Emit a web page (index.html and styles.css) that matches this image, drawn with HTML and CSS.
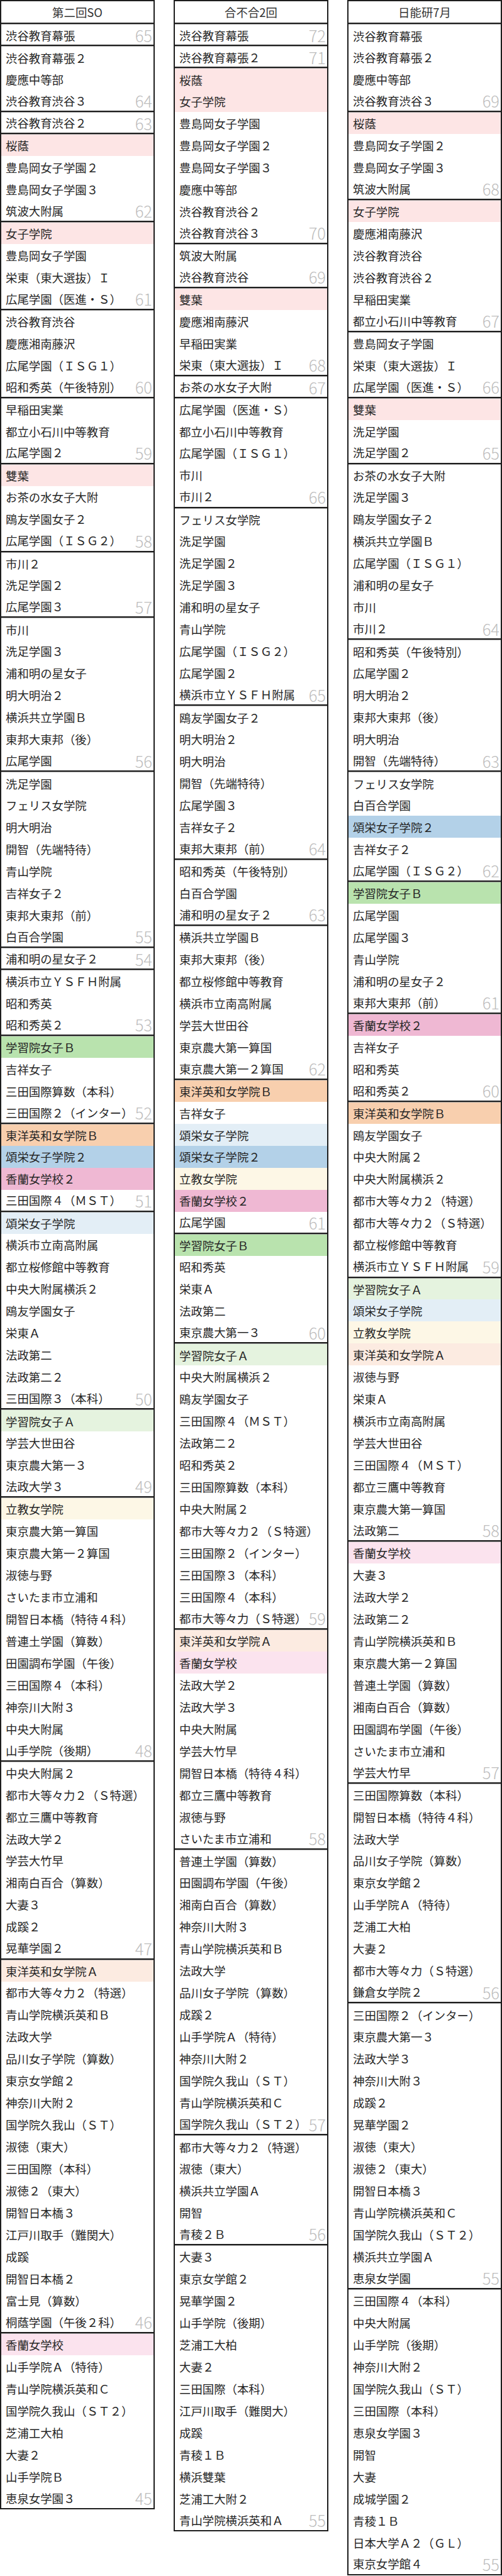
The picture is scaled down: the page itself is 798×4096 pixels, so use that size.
FILE: index.html
```html
<!DOCTYPE html>
<html lang="ja">
<head>
<meta charset="utf-8">
<title>偏差値比較</title>
<link rel="stylesheet" href="styles.css">
</head>
<body>
<div class="board">

<section class="col">
<div class="head">第二回SO</div>
<div class="grp">
<div class="row">渋谷教育幕張<b class="sc">65</b></div>
</div>
<div class="grp">
<div class="row">渋谷教育幕張２</div>
<div class="row">慶應中等部</div>
<div class="row">渋谷教育渋谷３<b class="sc">64</b></div>
</div>
<div class="grp">
<div class="row">渋谷教育渋谷２<b class="sc">63</b></div>
</div>
<div class="grp">
<div class="row pk">桜蔭</div>
<div class="row">豊島岡女子学園２</div>
<div class="row">豊島岡女子学園３</div>
<div class="row">筑波大附属<b class="sc">62</b></div>
</div>
<div class="grp">
<div class="row pk">女子学院</div>
<div class="row">豊島岡女子学園</div>
<div class="row">栄東（東大選抜）Ｉ</div>
<div class="row">広尾学園（医進・Ｓ）<b class="sc">61</b></div>
</div>
<div class="grp">
<div class="row">渋谷教育渋谷</div>
<div class="row">慶應湘南藤沢</div>
<div class="row">広尾学園（ＩＳＧ１）</div>
<div class="row">昭和秀英（午後特別）<b class="sc">60</b></div>
</div>
<div class="grp">
<div class="row">早稲田実業</div>
<div class="row">都立小石川中等教育</div>
<div class="row">広尾学園２<b class="sc">59</b></div>
</div>
<div class="grp">
<div class="row pk">雙葉</div>
<div class="row">お茶の水女子大附</div>
<div class="row">鴎友学園女子２</div>
<div class="row">広尾学園（ＩＳＧ２）<b class="sc">58</b></div>
</div>
<div class="grp">
<div class="row">市川２</div>
<div class="row">洗足学園２</div>
<div class="row">広尾学園３<b class="sc">57</b></div>
</div>
<div class="grp">
<div class="row">市川</div>
<div class="row">洗足学園３</div>
<div class="row">浦和明の星女子</div>
<div class="row">明大明治２</div>
<div class="row">横浜共立学園Ｂ</div>
<div class="row">東邦大東邦（後）</div>
<div class="row">広尾学園<b class="sc">56</b></div>
</div>
<div class="grp">
<div class="row">洗足学園</div>
<div class="row">フェリス女学院</div>
<div class="row">明大明治</div>
<div class="row">開智（先端特待）</div>
<div class="row">青山学院</div>
<div class="row">吉祥女子２</div>
<div class="row">東邦大東邦（前）</div>
<div class="row">白百合学園<b class="sc">55</b></div>
</div>
<div class="grp">
<div class="row">浦和明の星女子２<b class="sc">54</b></div>
</div>
<div class="grp">
<div class="row">横浜市立ＹＳＦＨ附属</div>
<div class="row">昭和秀英</div>
<div class="row">昭和秀英２<b class="sc">53</b></div>
</div>
<div class="grp">
<div class="row gr">学習院女子Ｂ</div>
<div class="row">吉祥女子</div>
<div class="row">三田国際算数（本科）</div>
<div class="row">三田国際２（インター）<b class="sc">52</b></div>
</div>
<div class="grp">
<div class="row or">東洋英和女学院Ｂ</div>
<div class="row bl">頌栄女子学院２</div>
<div class="row mg">香蘭女学校２</div>
<div class="row">三田国際４（ＭＳＴ）<b class="sc">51</b></div>
</div>
<div class="grp">
<div class="row lb">頌栄女子学院</div>
<div class="row">横浜市立南高附属</div>
<div class="row">都立桜修館中等教育</div>
<div class="row">中央大附属横浜２</div>
<div class="row">鴎友学園女子</div>
<div class="row">栄東Ａ</div>
<div class="row">法政第二</div>
<div class="row">法政第二２</div>
<div class="row">三田国際３（本科）<b class="sc">50</b></div>
</div>
<div class="grp">
<div class="row lg">学習院女子Ａ</div>
<div class="row">学芸大世田谷</div>
<div class="row">東京農大第一３</div>
<div class="row">法政大学３<b class="sc">49</b></div>
</div>
<div class="grp">
<div class="row cr">立教女学院</div>
<div class="row">東京農大第一算国</div>
<div class="row">東京農大第一２算国</div>
<div class="row">淑徳与野</div>
<div class="row">さいたま市立浦和</div>
<div class="row">開智日本橋（特待４科）</div>
<div class="row">普連土学園（算数）</div>
<div class="row">田園調布学園（午後）</div>
<div class="row">三田国際４（本科）</div>
<div class="row">神奈川大附３</div>
<div class="row">中央大附属</div>
<div class="row">山手学院（後期）<b class="sc">48</b></div>
</div>
<div class="grp">
<div class="row">中央大附属２</div>
<div class="row">都市大等々力２（Ｓ特選）</div>
<div class="row">都立三鷹中等教育</div>
<div class="row">法政大学２</div>
<div class="row">学芸大竹早</div>
<div class="row">湘南白百合（算数）</div>
<div class="row">大妻３</div>
<div class="row">成蹊２</div>
<div class="row">晃華学園２<b class="sc">47</b></div>
</div>
<div class="grp">
<div class="row lo">東洋英和女学院Ａ</div>
<div class="row">都市大等々力２（特選）</div>
<div class="row">青山学院横浜英和Ｂ</div>
<div class="row">法政大学</div>
<div class="row">品川女子学院（算数）</div>
<div class="row">東京女学館２</div>
<div class="row">神奈川大附２</div>
<div class="row">国学院久我山（ＳＴ）</div>
<div class="row">淑徳（東大）</div>
<div class="row">三田国際（本科）</div>
<div class="row">淑徳２（東大）</div>
<div class="row">開智日本橋３</div>
<div class="row">江戸川取手（難関大）</div>
<div class="row">成蹊</div>
<div class="row">開智日本橋２</div>
<div class="row">富士見（算数）</div>
<div class="row">桐蔭学園（午後２科）<b class="sc">46</b></div>
</div>
<div class="grp">
<div class="row lp">香蘭女学校</div>
<div class="row">山手学院Ａ（特待）</div>
<div class="row">青山学院横浜英和Ｃ</div>
<div class="row">国学院久我山（ＳＴ２）</div>
<div class="row">芝浦工大柏</div>
<div class="row">大妻２</div>
<div class="row">山手学院Ｂ</div>
<div class="row">恵泉女学園３<b class="sc">45</b></div>
</div>
</section>

<section class="col">
<div class="head">合不合2回</div>
<div class="grp">
<div class="row">渋谷教育幕張<b class="sc">72</b></div>
</div>
<div class="grp">
<div class="row">渋谷教育幕張２<b class="sc">71</b></div>
</div>
<div class="grp">
<div class="row pk">桜蔭</div>
<div class="row pk">女子学院</div>
<div class="row">豊島岡女子学園</div>
<div class="row">豊島岡女子学園２</div>
<div class="row">豊島岡女子学園３</div>
<div class="row">慶應中等部</div>
<div class="row">渋谷教育渋谷２</div>
<div class="row">渋谷教育渋谷３<b class="sc">70</b></div>
</div>
<div class="grp">
<div class="row">筑波大附属</div>
<div class="row">渋谷教育渋谷<b class="sc">69</b></div>
</div>
<div class="grp">
<div class="row pk">雙葉</div>
<div class="row">慶應湘南藤沢</div>
<div class="row">早稲田実業</div>
<div class="row">栄東（東大選抜）Ｉ<b class="sc">68</b></div>
</div>
<div class="grp">
<div class="row">お茶の水女子大附<b class="sc">67</b></div>
</div>
<div class="grp">
<div class="row">広尾学園（医進・Ｓ）</div>
<div class="row">都立小石川中等教育</div>
<div class="row">広尾学園（ＩＳＧ１）</div>
<div class="row">市川</div>
<div class="row">市川２<b class="sc">66</b></div>
</div>
<div class="grp">
<div class="row">フェリス女学院</div>
<div class="row">洗足学園</div>
<div class="row">洗足学園２</div>
<div class="row">洗足学園３</div>
<div class="row">浦和明の星女子</div>
<div class="row">青山学院</div>
<div class="row">広尾学園（ＩＳＧ２）</div>
<div class="row">広尾学園２</div>
<div class="row">横浜市立ＹＳＦＨ附属<b class="sc">65</b></div>
</div>
<div class="grp">
<div class="row">鴎友学園女子２</div>
<div class="row">明大明治２</div>
<div class="row">明大明治</div>
<div class="row">開智（先端特待）</div>
<div class="row">広尾学園３</div>
<div class="row">吉祥女子２</div>
<div class="row">東邦大東邦（前）<b class="sc">64</b></div>
</div>
<div class="grp">
<div class="row">昭和秀英（午後特別）</div>
<div class="row">白百合学園</div>
<div class="row">浦和明の星女子２<b class="sc">63</b></div>
</div>
<div class="grp">
<div class="row">横浜共立学園Ｂ</div>
<div class="row">東邦大東邦（後）</div>
<div class="row">都立桜修館中等教育</div>
<div class="row">横浜市立南高附属</div>
<div class="row">学芸大世田谷</div>
<div class="row">東京農大第一算国</div>
<div class="row">東京農大第一２算国<b class="sc">62</b></div>
</div>
<div class="grp">
<div class="row or">東洋英和女学院Ｂ</div>
<div class="row">吉祥女子</div>
<div class="row lb">頌栄女子学院</div>
<div class="row bl">頌栄女子学院２</div>
<div class="row cr">立教女学院</div>
<div class="row mg">香蘭女学校２</div>
<div class="row">広尾学園<b class="sc">61</b></div>
</div>
<div class="grp">
<div class="row gr">学習院女子Ｂ</div>
<div class="row">昭和秀英</div>
<div class="row">栄東Ａ</div>
<div class="row">法政第二</div>
<div class="row">東京農大第一３<b class="sc">60</b></div>
</div>
<div class="grp">
<div class="row lg">学習院女子Ａ</div>
<div class="row">中央大附属横浜２</div>
<div class="row">鴎友学園女子</div>
<div class="row">三田国際４（ＭＳＴ）</div>
<div class="row">法政第二２</div>
<div class="row">昭和秀英２</div>
<div class="row">三田国際算数（本科）</div>
<div class="row">中央大附属２</div>
<div class="row">都市大等々力２（Ｓ特選）</div>
<div class="row">三田国際２（インター）</div>
<div class="row">三田国際３（本科）</div>
<div class="row">三田国際４（本科）</div>
<div class="row">都市大等々力（Ｓ特選）<b class="sc">59</b></div>
</div>
<div class="grp">
<div class="row lo">東洋英和女学院Ａ</div>
<div class="row lp">香蘭女学校</div>
<div class="row">法政大学２</div>
<div class="row">法政大学３</div>
<div class="row">中央大附属</div>
<div class="row">学芸大竹早</div>
<div class="row">開智日本橋（特待４科）</div>
<div class="row">都立三鷹中等教育</div>
<div class="row">淑徳与野</div>
<div class="row">さいたま市立浦和<b class="sc">58</b></div>
</div>
<div class="grp">
<div class="row">普連土学園（算数）</div>
<div class="row">田園調布学園（午後）</div>
<div class="row">湘南白百合（算数）</div>
<div class="row">神奈川大附３</div>
<div class="row">青山学院横浜英和Ｂ</div>
<div class="row">法政大学</div>
<div class="row">品川女子学院（算数）</div>
<div class="row">成蹊２</div>
<div class="row">山手学院Ａ（特待）</div>
<div class="row">神奈川大附２</div>
<div class="row">国学院久我山（ＳＴ）</div>
<div class="row">青山学院横浜英和Ｃ</div>
<div class="row">国学院久我山（ＳＴ２）<b class="sc">57</b></div>
</div>
<div class="grp">
<div class="row">都市大等々力２（特選）</div>
<div class="row">淑徳（東大）</div>
<div class="row">横浜共立学園Ａ</div>
<div class="row">開智</div>
<div class="row">青稜２Ｂ<b class="sc">56</b></div>
</div>
<div class="grp">
<div class="row">大妻３</div>
<div class="row">東京女学館２</div>
<div class="row">晃華学園２</div>
<div class="row">山手学院（後期）</div>
<div class="row">芝浦工大柏</div>
<div class="row">大妻２</div>
<div class="row">三田国際（本科）</div>
<div class="row">江戸川取手（難関大）</div>
<div class="row">成蹊</div>
<div class="row">青稜１Ｂ</div>
<div class="row">横浜雙葉</div>
<div class="row">芝浦工大附２</div>
<div class="row">青山学院横浜英和Ａ<b class="sc">55</b></div>
</div>
</section>

<section class="col">
<div class="head">日能研7月</div>
<div class="grp">
<div class="row">渋谷教育幕張</div>
<div class="row">渋谷教育幕張２</div>
<div class="row">慶應中等部</div>
<div class="row">渋谷教育渋谷３<b class="sc">69</b></div>
</div>
<div class="grp">
<div class="row pk">桜蔭</div>
<div class="row">豊島岡女子学園２</div>
<div class="row">豊島岡女子学園３</div>
<div class="row">筑波大附属<b class="sc">68</b></div>
</div>
<div class="grp">
<div class="row pk">女子学院</div>
<div class="row">慶應湘南藤沢</div>
<div class="row">渋谷教育渋谷</div>
<div class="row">渋谷教育渋谷２</div>
<div class="row">早稲田実業</div>
<div class="row">都立小石川中等教育<b class="sc">67</b></div>
</div>
<div class="grp">
<div class="row">豊島岡女子学園</div>
<div class="row">栄東（東大選抜）Ｉ</div>
<div class="row">広尾学園（医進・Ｓ）<b class="sc">66</b></div>
</div>
<div class="grp">
<div class="row pk">雙葉</div>
<div class="row">洗足学園</div>
<div class="row">洗足学園２<b class="sc">65</b></div>
</div>
<div class="grp">
<div class="row">お茶の水女子大附</div>
<div class="row">洗足学園３</div>
<div class="row">鴎友学園女子２</div>
<div class="row">横浜共立学園Ｂ</div>
<div class="row">広尾学園（ＩＳＧ１）</div>
<div class="row">浦和明の星女子</div>
<div class="row">市川</div>
<div class="row">市川２<b class="sc">64</b></div>
</div>
<div class="grp">
<div class="row">昭和秀英（午後特別）</div>
<div class="row">広尾学園２</div>
<div class="row">明大明治２</div>
<div class="row">東邦大東邦（後）</div>
<div class="row">明大明治</div>
<div class="row">開智（先端特待）<b class="sc">63</b></div>
</div>
<div class="grp">
<div class="row">フェリス女学院</div>
<div class="row">白百合学園</div>
<div class="row bl">頌栄女子学院２</div>
<div class="row">吉祥女子２</div>
<div class="row">広尾学園（ＩＳＧ２）<b class="sc">62</b></div>
</div>
<div class="grp">
<div class="row gr">学習院女子Ｂ</div>
<div class="row">広尾学園</div>
<div class="row">広尾学園３</div>
<div class="row">青山学院</div>
<div class="row">浦和明の星女子２</div>
<div class="row">東邦大東邦（前）<b class="sc">61</b></div>
</div>
<div class="grp">
<div class="row mg">香蘭女学校２</div>
<div class="row">吉祥女子</div>
<div class="row">昭和秀英</div>
<div class="row">昭和秀英２<b class="sc">60</b></div>
</div>
<div class="grp">
<div class="row or">東洋英和女学院Ｂ</div>
<div class="row">鴎友学園女子</div>
<div class="row">中央大附属２</div>
<div class="row">中央大附属横浜２</div>
<div class="row">都市大等々力２（特選）</div>
<div class="row">都市大等々力２（Ｓ特選）</div>
<div class="row">都立桜修館中等教育</div>
<div class="row">横浜市立ＹＳＦＨ附属<b class="sc">59</b></div>
</div>
<div class="grp">
<div class="row lg">学習院女子Ａ</div>
<div class="row lb">頌栄女子学院</div>
<div class="row cr">立教女学院</div>
<div class="row lo">東洋英和女学院Ａ</div>
<div class="row">淑徳与野</div>
<div class="row">栄東Ａ</div>
<div class="row">横浜市立南高附属</div>
<div class="row">学芸大世田谷</div>
<div class="row">三田国際４（ＭＳＴ）</div>
<div class="row">都立三鷹中等教育</div>
<div class="row">東京農大第一算国</div>
<div class="row">法政第二<b class="sc">58</b></div>
</div>
<div class="grp">
<div class="row lp">香蘭女学校</div>
<div class="row">大妻３</div>
<div class="row">法政大学２</div>
<div class="row">法政第二２</div>
<div class="row">青山学院横浜英和Ｂ</div>
<div class="row">東京農大第一２算国</div>
<div class="row">普連土学園（算数）</div>
<div class="row">湘南白百合（算数）</div>
<div class="row">田園調布学園（午後）</div>
<div class="row">さいたま市立浦和</div>
<div class="row">学芸大竹早<b class="sc">57</b></div>
</div>
<div class="grp">
<div class="row">三田国際算数（本科）</div>
<div class="row">開智日本橋（特待４科）</div>
<div class="row">法政大学</div>
<div class="row">品川女子学院（算数）</div>
<div class="row">東京女学館２</div>
<div class="row">山手学院Ａ（特待）</div>
<div class="row">芝浦工大柏</div>
<div class="row">大妻２</div>
<div class="row">都市大等々力（Ｓ特選）</div>
<div class="row">鎌倉女学院２<b class="sc">56</b></div>
</div>
<div class="grp">
<div class="row">三田国際２（インター）</div>
<div class="row">東京農大第一３</div>
<div class="row">法政大学３</div>
<div class="row">神奈川大附３</div>
<div class="row">成蹊２</div>
<div class="row">晃華学園２</div>
<div class="row">淑徳（東大）</div>
<div class="row">淑徳２（東大）</div>
<div class="row">開智日本橋３</div>
<div class="row">青山学院横浜英和Ｃ</div>
<div class="row">国学院久我山（ＳＴ２）</div>
<div class="row">横浜共立学園Ａ</div>
<div class="row">恵泉女学園<b class="sc">55</b></div>
</div>
<div class="grp">
<div class="row">三田国際４（本科）</div>
<div class="row">中央大附属</div>
<div class="row">山手学院（後期）</div>
<div class="row">神奈川大附２</div>
<div class="row">国学院久我山（ＳＴ）</div>
<div class="row">三田国際（本科）</div>
<div class="row">恵泉女学園３</div>
<div class="row">開智</div>
<div class="row">大妻</div>
<div class="row">成城学園２</div>
<div class="row">青稜１Ｂ</div>
<div class="row">日本大学Ａ２（ＧＬ）</div>
<div class="row">東京女学館４<b class="sc">55</b></div>
</div>
</section>

</div>
</body>
</html>
```

FILE: styles.css
```css
html,
body {
  margin: 0;
  padding: 0;
  background: #ffffff;
}

body {
  font-family: "Noto Sans CJK JP", "Noto Sans CJK SC", sans-serif;
  color: #262626;
}

.board {
  width: 798px;
  display: grid;
  grid-template-columns: repeat(3, 246px);
  column-gap: 30px;
  align-items: start;
}

.col {
  border: 2px solid #1d1d1d;
  border-bottom: 0;
}

.head {
  height: 36.3px;
  box-sizing: border-box;
  border-bottom: 2px solid #1d1d1d;
  display: flex;
  align-items: center;
  justify-content: center;
  font-size: 18.4px;
  line-height: 1;
  color: #333333;
}

.row {
  height: 34.97px;
  box-sizing: border-box;
  display: flex;
  align-items: center;
  justify-content: space-between;
  padding: 1px 2px 0 7px;
  font-size: 18.4px;
  line-height: 1;
  white-space: nowrap;
}

.grp > .row:first-child {
  border-top: 1px solid #9a9a9a;
}

.grp > .row:last-child {
  border-bottom: 2px solid #1d1d1d;
}

.sc {
  font-size: 25.5px;
  font-weight: 300;
  color: #bdbdbd;
  line-height: 1;
}

.pk { background: #fde5e5; }
.gr { background: #b9e3ae; }
.lg { background: #e5f3df; }
.or { background: #f8cfae; }
.lo { background: #fcebe1; }
.bl { background: #b3d1e8; }
.lb { background: #e3eef6; }
.mg { background: #efb8d3; }
.lp { background: #fbe3ee; }
.cr { background: #fdf7e6; }
```
